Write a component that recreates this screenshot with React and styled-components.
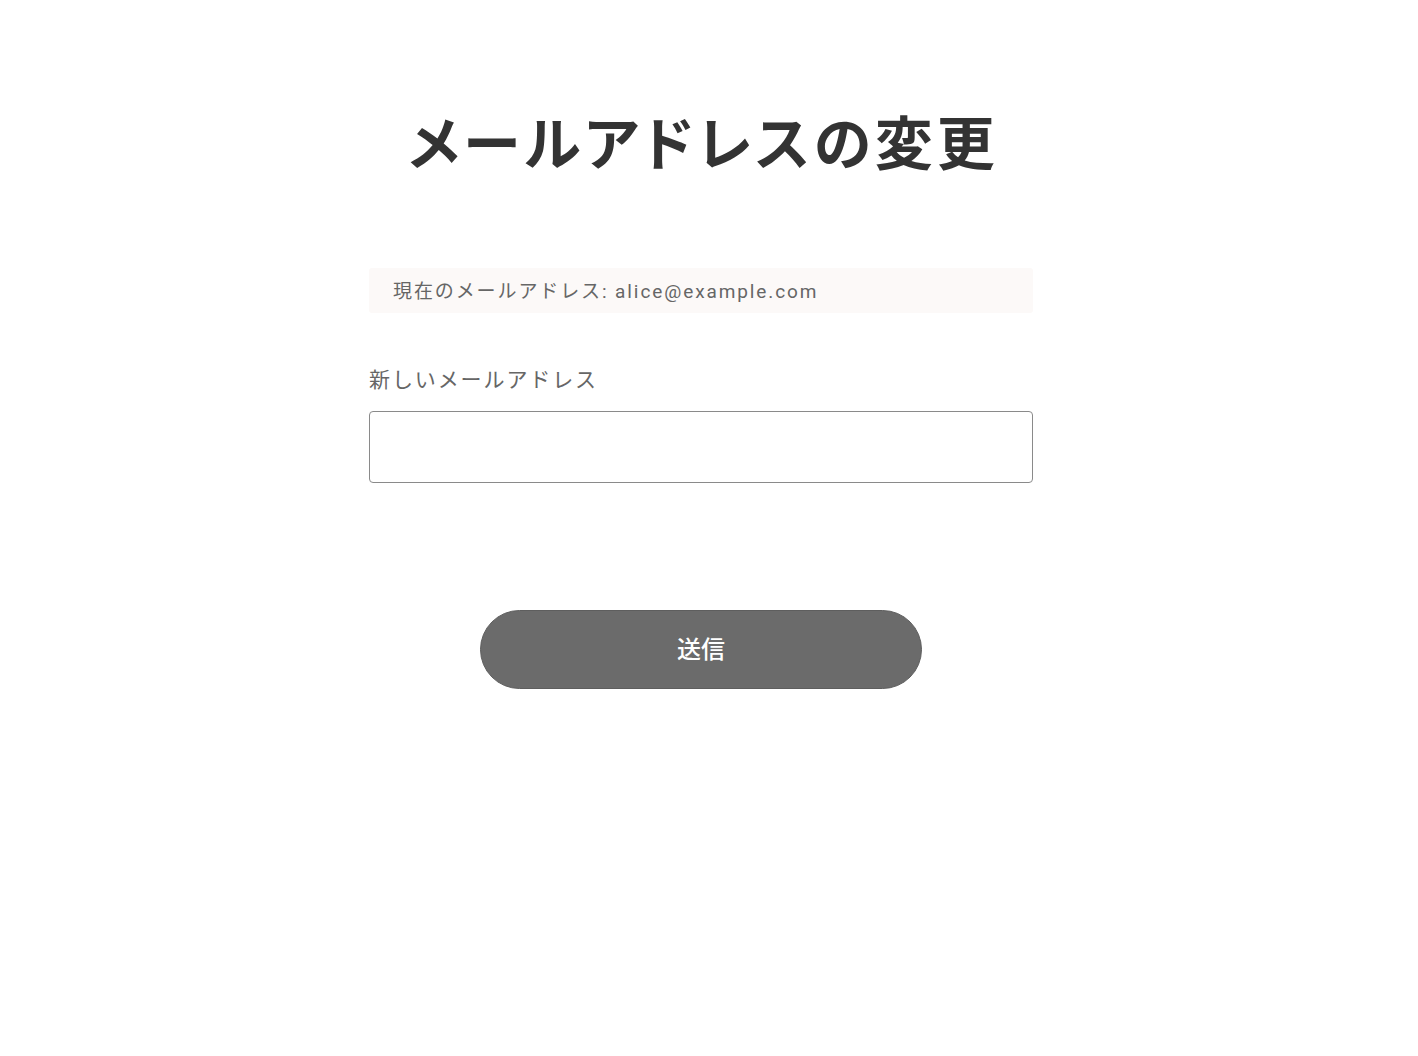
import React from "react";
import styled, { createGlobalStyle } from "styled-components";

const Global = createGlobalStyle`
  html, body { margin: 0; padding: 0; background: #ffffff; }
  body { font-family: Roboto, "Noto Sans CJK JP", sans-serif; color: #333; }
  * { box-sizing: border-box; }
`;

const Page = styled.main`
  width: 664px;
  margin: 0 auto;
  padding-top: 100px;
  display: flex;
  flex-direction: column;
  transform: translateX(-8px);
`;

const Title = styled.h1`
  margin: 0;
  padding-left: 5px;
  text-align: center;
  font-family: "Noto Sans CJK JP", sans-serif;
  font-feature-settings: "palt";
  font-size: 58px;
  font-weight: 700;
  line-height: 80px;
  letter-spacing: 3.9px;
  color: #333333;
`;

const Current = styled.div`
  margin-top: 88px;
  height: 45px;
  background: #fcf9f8;
  border-radius: 3px;
  padding: 0 24px 3px;
  display: flex;
  align-items: center;
  font-size: 19px;
  letter-spacing: 1.9px;
  color: #666666;
`;

const Field = styled.div`
  margin-top: 52px;
  display: flex;
  flex-direction: column;
  gap: 16px;
`;

const Label = styled.label`
  font-size: 21px;
  line-height: 30px;
  letter-spacing: 1.9px;
  color: #666666;
`;

const Input = styled.input`
  height: 72px;
  border: 1px solid #8a8a8a;
  border-radius: 4px;
  padding: 0 16px;
  font-size: 18px;
  outline: none;
`;

const Actions = styled.div`
  margin-top: 127px;
  display: flex;
  justify-content: center;
`;

const Submit = styled.button`
  width: 442px;
  height: 79px;
  padding: 0 0 4px;
  border-radius: 40px;
  border: 1px solid #5e5e5e;
  background: #6b6b6b;
  color: #ffffff;
  font-family: "Noto Sans CJK JP", sans-serif;
  font-size: 24px;
  font-weight: 500;
  cursor: pointer;
`;

export default function App() {
  return (
    <>
      <Global />
      <Page>
        <Title>メールアドレスの変更</Title>
        <Current>現在のメールアドレス: alice@example.com</Current>
        <Field>
          <Label htmlFor="email">新しいメールアドレス</Label>
          <Input id="email" type="email" />
        </Field>
        <Actions>
          <Submit type="button">送信</Submit>
        </Actions>
      </Page>
    </>
  );
}
